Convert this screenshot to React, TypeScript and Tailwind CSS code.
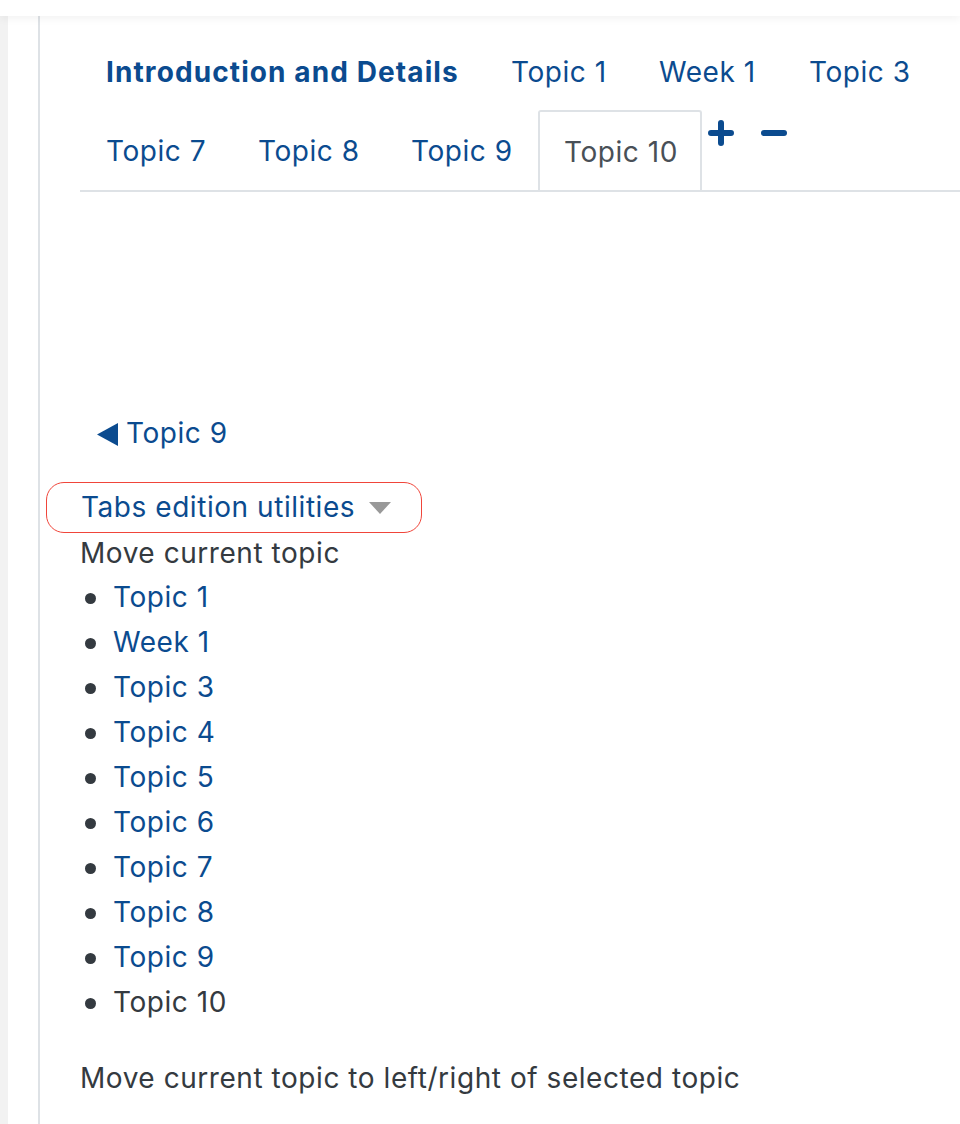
import React from "react"

const BLUE = "text-[#0b4b8f]"

const row1 = [
  { label: "Introduction and Details", cls: "w-[405px] font-bold tracking-[1.1px]" },
  { label: "Topic 1", cls: "w-[148px]" },
  { label: "Week 1", cls: "w-[150px]" },
  { label: "Topic 3", cls: "w-[150px]" },
]

const row2 = [
  { label: "Topic 7", cls: "w-[152px]" },
  { label: "Topic 8", cls: "w-[153px]" },
  { label: "Topic 9", cls: "w-[153px]" },
]

const moveTargets = [
  "Topic 1",
  "Week 1",
  "Topic 3",
  "Topic 4",
  "Topic 5",
  "Topic 6",
  "Topic 7",
  "Topic 8",
  "Topic 9",
]

function PlusIcon() {
  return (
    <svg width="28" height="26" viewBox="0 0 28 26">
      <path d="M14 3v20M4 13h20" stroke="#0b4b8f" strokeWidth="6" strokeLinecap="round" />
    </svg>
  )
}

function MinusIcon() {
  return (
    <svg width="28" height="10" viewBox="0 0 28 10">
      <path d="M4 5h20" stroke="#0b4b8f" strokeWidth="6" strokeLinecap="round" />
    </svg>
  )
}

export default function App() {
  return (
    <div
      className="w-[960px] h-[1124px] overflow-hidden bg-white flex flex-col text-[28px] leading-[45px] tracking-[0.55px] text-[#343a40]"
      style={{ fontFamily: "Inter, 'Noto Sans', sans-serif" }}
    >
      <div className="h-4 bg-white shrink-0 relative z-10 shadow-[0_3px_8px_rgba(0,0,0,0.05)]" />
      <div className="flex flex-1 min-h-0">
        <div className="w-2 bg-[#f2f2f2] shrink-0" />
        <div className="w-[30px] bg-white shrink-0" />
        <div className="w-[2px] bg-[#dee2e6] shrink-0" />
        <div className="flex-1 min-w-0 pl-10 pt-[14px]">
          {/* tabs */}
          <div className="w-[1100px]">
            <ul className="flex whitespace-nowrap">
              {row1.map((t) => (
                <li key={t.label} className={`h-[80px] flex items-center pl-[26px] pt-[4px] shrink-0 ${BLUE} ${t.cls}`}>
                  {t.label}
                </li>
              ))}
            </ul>
            <ul className="flex whitespace-nowrap border-b-2 border-[#dee2e6]">
              {row2.map((t) => (
                <li key={t.label} className={`h-[80px] flex items-center pl-[26px] pt-[2px] shrink-0 ${BLUE} ${t.cls}`}>
                  {t.label}
                </li>
              ))}
              <li className="h-[80px] w-[164px] -mb-[2px] flex items-center pl-[24px] pt-[2px] bg-white border-2 border-b-0 border-[#dee2e6] rounded-t-[3px] text-[#495057] shrink-0">
                Topic 10
              </li>
              <li className="flex items-start gap-[25px] ml-[5px] pt-[10px]">
                <PlusIcon />
                <span className="pt-[8px]">
                  <MinusIcon />
                </span>
              </li>
            </ul>
          </div>

          {/* section navigation */}
          <div className="mt-[220px] h-[45px] flex items-center pl-[17px] gap-[8px]">
            <svg width="21" height="23" viewBox="0 0 21 23">
              <path d="M21 0v23L0 11.5z" fill="#0b4b8f" />
            </svg>
            <span className={`${BLUE} -mt-[2px]`}>Topic 9</span>
          </div>

          {/* tabs edition utilities */}
          <div className="mt-[25px] -ml-[34px] w-[376px] h-[51px] border border-[#f0453a] rounded-[18px] pl-[34px] flex items-center gap-[14px]">
            <span className={BLUE}>Tabs edition utilities</span>
            <svg width="22" height="12" viewBox="0 0 22 12">
              <path d="M0 0h22L11 12z" fill="#999999" />
            </svg>
          </div>
          <div className="-mt-[2px]">Move current topic</div>
          <ul className="-mt-[1px]">
            {moveTargets.map((t) => (
              <li key={t} className="flex items-center h-[45px]">
                <span className="w-[11px] h-[11px] rounded-full bg-[#343a40] ml-[5px] mr-[17px] mt-[2px]" />
                <span className={BLUE}>{t}</span>
              </li>
            ))}
            <li className="flex items-center h-[45px]">
              <span className="w-[11px] h-[11px] rounded-full bg-[#343a40] ml-[5px] mr-[17px] mt-[2px]" />
              <span>Topic 10</span>
            </li>
          </ul>
          <div className="mt-[31px]">Move current topic to left/right of selected topic</div>
        </div>
      </div>
    </div>
  )
}
